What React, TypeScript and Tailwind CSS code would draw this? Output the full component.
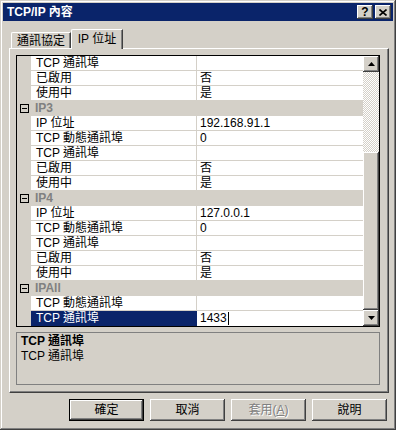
import React from 'react';

type Row =
  | { kind: 'header'; label: string }
  | { kind: 'item'; label: string; value?: string; selected?: boolean };

const rows: Row[] = [
  { kind: 'item', label: 'TCP 通訊埠' },
  { kind: 'item', label: '已啟用', value: '否' },
  { kind: 'item', label: '使用中', value: '是' },
  { kind: 'header', label: 'IP3' },
  { kind: 'item', label: 'IP 位址', value: '192.168.91.1' },
  { kind: 'item', label: 'TCP 動態通訊埠', value: '0' },
  { kind: 'item', label: 'TCP 通訊埠' },
  { kind: 'item', label: '已啟用', value: '否' },
  { kind: 'item', label: '使用中', value: '是' },
  { kind: 'header', label: 'IP4' },
  { kind: 'item', label: 'IP 位址', value: '127.0.0.1' },
  { kind: 'item', label: 'TCP 動態通訊埠', value: '0' },
  { kind: 'item', label: 'TCP 通訊埠' },
  { kind: 'item', label: '已啟用', value: '否' },
  { kind: 'item', label: '使用中', value: '是' },
  { kind: 'header', label: 'IPAll' },
  { kind: 'item', label: 'TCP 動態通訊埠' },
  { kind: 'item', label: 'TCP 通訊埠', value: '1433', selected: true },
];

// classic raised 3D edge
const raised =
  'bg-[#d4d0c8] shadow-[inset_-1px_-1px_#404040,inset_1px_1px_#ffffff,inset_-2px_-2px_#808080,inset_2px_2px_#d4d0c8]';

const Arrow = ({ down }: { down?: boolean }) => (
  <svg width="7" height="4" viewBox="0 0 7 4">
    <path d={down ? 'M0 0h7L3.5 4z' : 'M0 4h7L3.5 0z'} fill="#000" />
  </svg>
);

const GridRow = ({ row }: { row: Row }) => {
  if (row.kind === 'header') {
    return (
      <div className="flex h-[15px] bg-[#d4d0c8]">
        <div className="w-[14px] flex items-center justify-center">
          <div className="w-[9px] h-[9px] border border-black bg-[#d4d0c8] flex items-center justify-center">
            <div className="w-[5px] h-px bg-black" />
          </div>
        </div>
        <div className="pl-[4px] leading-[15px] font-bold text-[#808080]">{row.label}</div>
      </div>
    );
  }
  return (
    <div className="flex h-[15px]">
      <div className="w-[14px] bg-[#d4d0c8]" />
      <div
        className={
          row.selected
            ? 'w-[166px] h-[15px] bg-[#0a246a] text-white pl-[5px] leading-[15px]'
            : 'w-[166px] h-[15px] bg-white border-b border-r border-[#d4d0c8] pl-[5px] leading-[14px]'
        }
      >
        {row.label}
      </div>
      <div
        className={
          row.selected
            ? 'flex-1 h-[15px] bg-white pl-[3px] leading-[15px] flex items-center'
            : 'flex-1 h-[15px] bg-white border-b border-[#d4d0c8] pl-[3px] leading-[14px]'
        }
      >
        {row.value}
        {row.selected && <span className="inline-block w-px h-[13px] bg-black ml-px" />}
      </div>
    </div>
  );
};

const Button = ({
  label,
  primary,
  disabled,
}: {
  label: React.ReactNode;
  primary?: boolean;
  disabled?: boolean;
}) => (
  <div
    className={
      primary
        ? 'w-[75px] h-[22px] border border-black'
        : 'w-[75px] h-[22px]'
    }
  >
    <div
      className={`${raised} w-full h-full flex items-center justify-center leading-none ${
        disabled ? 'text-[#808080] [text-shadow:1px_1px_#ffffff]' : 'text-black'
      }`}
    >
      {label}
    </div>
  </div>
);

export default function App() {
  return (
    <div className="w-[396px] h-[430px] bg-[#d4d0c8] p-[3px] flex flex-col text-[12px] text-black font-['Liberation_Sans','Noto_Sans_CJK_TC',sans-serif] shadow-[inset_-1px_-1px_#404040,inset_1px_1px_#d4d0c8,inset_-2px_-2px_#808080,inset_2px_2px_#ffffff]">
      {/* title bar */}
      <div className="h-[18px] bg-[#0a246a] flex items-center justify-between pl-[4px] pr-[2px]">
        <span className="text-white font-bold leading-none">TCP/IP 內容</span>
        <div className="flex gap-[2px]">
          <div className={`${raised} w-[16px] h-[14px] flex items-center justify-center font-bold text-[12px] leading-none`}>
            ?
          </div>
          <div className={`${raised} w-[16px] h-[14px] flex items-center justify-center`}>
            <svg width="8" height="7" viewBox="0 0 8 7">
              <path d="M0.5 0.5L7.5 6.5M7.5 0.5L0.5 6.5" stroke="#000" strokeWidth="1.6" />
            </svg>
          </div>
        </div>
      </div>

      {/* tabs */}
      <div className="mt-[8px] ml-[6px] h-[19px] flex items-end relative z-10">
        <div className="ml-[2px] w-[60px] h-[16px] border-t border-l border-white rounded-tl-[2px] shadow-[inset_-1px_0_#808080] border-r border-r-[#404040] flex items-center justify-center leading-none">
          通訊協定
        </div>
        <div className="w-[52px] h-[20px] -mb-px bg-[#d4d0c8] border-t border-l border-white rounded-tl-[2px] border-r border-r-[#404040] shadow-[inset_-1px_0_#808080] flex items-center justify-center leading-none pb-[2px]">
          IP 位址
        </div>
      </div>

      {/* panel */}
      <div className="ml-[6px] w-[380px] h-[345px] border-t border-l border-white border-r border-b border-r-[#404040] border-b-[#404040] shadow-[inset_-1px_-1px_#808080] pl-[6px] pt-[6px]">
        <div className="w-[364px] h-[272px] border border-black flex">
          <div className="w-[346px] flex flex-col">
            {rows.map((r, i) => (
              <GridRow key={i} row={r} />
            ))}
          </div>
          <div className="w-[16px] flex flex-col">
            <div className={`${raised} h-[16px] flex items-center justify-center`}>
              <Arrow />
            </div>
            <div className="h-[80px] bg-[image:repeating-conic-gradient(#ffffff_0_25%,#d4d0c8_0_50%)] bg-[length:2px_2px]" />
            <div className={`${raised} h-[158px]`} />
            <div className={`${raised} h-[16px] flex items-center justify-center`}>
              <Arrow down />
            </div>
          </div>
        </div>

        <div className="mt-[5px] w-[364px] h-[53px] border border-[#808080] pl-[4px] pt-[1px]">
          <div className="font-bold leading-[15px]">TCP 通訊埠</div>
          <div className="leading-[15px]">TCP 通訊埠</div>
        </div>
      </div>

      {/* buttons */}
      <div className="mt-[6px] flex justify-end gap-[6px] pr-[6px]">
        <Button label="確定" primary />
        <Button label="取消" />
        <Button
          label={
            <span>
              套用(<span className="underline">A</span>)
            </span>
          }
          disabled
        />
        <Button label="說明" />
      </div>
    </div>
  );
}
